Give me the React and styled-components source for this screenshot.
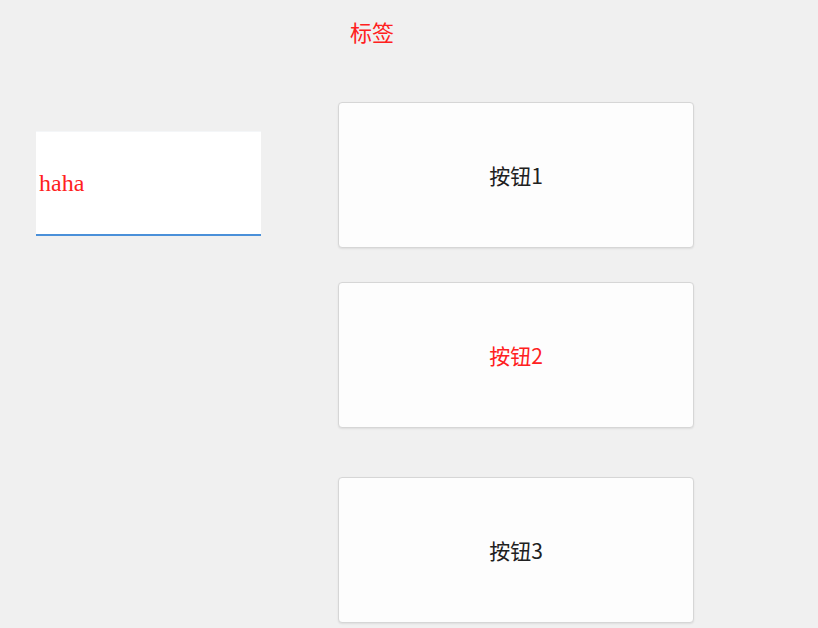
import styled, { createGlobalStyle } from "styled-components";

const GlobalStyle = createGlobalStyle`
  html, body {
    margin: 0;
    padding: 0;
    background: #f0f0f0;
  }
  body {
    font-family: "Noto Sans CJK SC", "Noto Sans", sans-serif;
  }
`;

const Page = styled.div`
  width: 818px;
  height: 628px;
  display: flex;
  overflow: hidden;
`;

const LeftColumn = styled.div`
  width: 302px;
  padding: 131px 0 0 36px;
`;

const TextField = styled.input`
  box-sizing: border-box;
  width: 225px;
  height: 105px;
  padding: 0 0 0 3px;
  border: none;
  border-top: 1px solid #f4f6f8;
  border-bottom: 2px solid #4a90d9;
  background: #fff;
  color: #ff2020;
  font-family: "Liberation Serif", serif;
  font-size: 24px;
  outline: none;
`;

const RightColumn = styled.div`
  display: flex;
  flex-direction: column;
`;

const Label = styled.div`
  margin: 16px 0 0 12px;
  height: 30px;
  color: #ff2020;
  font-size: 22px;
  line-height: 30px;
`;

const Button = styled.button`
  box-sizing: border-box;
  width: 356px;
  height: 146px;
  margin-top: ${({ $gap }) => $gap}px;
  border: 1px solid #d6d6d6;
  border-radius: 4px;
  background: #fdfdfd;
  box-shadow: 0 1px 2px rgba(0, 0, 0, 0.08);
  color: ${({ $red }) => ($red ? "#ff2020" : "#202020")};
  font-family: "Noto Sans CJK SC", "Noto Sans", sans-serif;
  font-size: 21px;
  cursor: pointer;
`;

export default function App() {
  return (
    <>
      <GlobalStyle />
      <Page>
        <LeftColumn>
          <TextField defaultValue="haha" />
        </LeftColumn>
        <RightColumn>
          <Label>标签</Label>
          <Button $gap={56}>按钮1</Button>
          <Button $gap={34} $red>
            按钮2
          </Button>
          <Button $gap={49}>按钮3</Button>
        </RightColumn>
      </Page>
    </>
  );
}
